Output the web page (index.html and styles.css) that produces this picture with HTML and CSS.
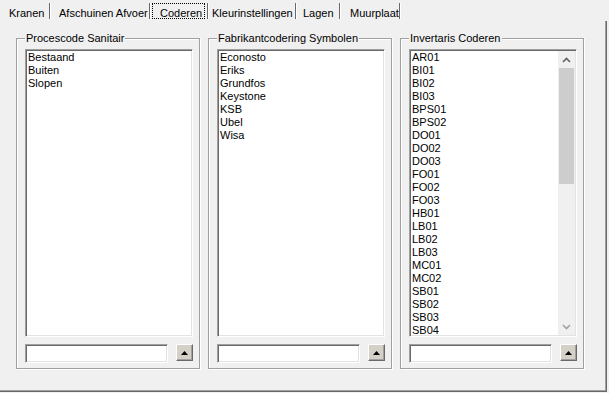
FILE: index.html
```html
<!DOCTYPE html>
<html lang="nl">
<head>
    <meta charset="UTF-8" />
    <title>Coderen</title>
    <link rel="stylesheet" href="styles.css">
</head>
<body>
    <div class="tabs">
        <div class="tab">Kranen</div>
        <div class="tab">Afschuinen Afvoer</div>
        <div class="tab active"><span class="focus">Coderen</span></div>
        <div class="tab">Kleurinstellingen</div>
        <div class="tab">Lagen</div>
        <div class="tab">Muurplaat</div>
    </div>
    <div class="page">
        <fieldset class="group">
            <legend>Procescode Sanitair</legend>
            <div class="list">
                <div class="items">
                    <div>Bestaand</div>
                    <div>Buiten</div>
                    <div>Slopen</div>
                </div>
            </div>
            <div class="entry">
                <div class="edit"></div>
                <button class="spin"><svg width="7" height="4" viewBox="0 0 7 4"><polygon points="3.5,0 7,4 0,4" fill="#000"/></svg></button>
            </div>
        </fieldset>
        <fieldset class="group">
            <legend>Fabrikantcodering Symbolen</legend>
            <div class="list">
                <div class="items">
                    <div>Econosto</div>
                    <div>Eriks</div>
                    <div>Grundfos</div>
                    <div>Keystone</div>
                    <div>KSB</div>
                    <div>Ubel</div>
                    <div>Wisa</div>
                </div>
            </div>
            <div class="entry">
                <div class="edit"></div>
                <button class="spin"><svg width="7" height="4" viewBox="0 0 7 4"><polygon points="3.5,0 7,4 0,4" fill="#000"/></svg></button>
            </div>
        </fieldset>
        <fieldset class="group">
            <legend>Invertaris Coderen</legend>
            <div class="list">
                <div class="items">
                    <div>AR01</div>
                    <div>BI01</div>
                    <div>BI02</div>
                    <div>BI03</div>
                    <div>BPS01</div>
                    <div>BPS02</div>
                    <div>DO01</div>
                    <div>DO02</div>
                    <div>DO03</div>
                    <div>FO01</div>
                    <div>FO02</div>
                    <div>FO03</div>
                    <div>HB01</div>
                    <div>LB01</div>
                    <div>LB02</div>
                    <div>LB03</div>
                    <div>MC01</div>
                    <div>MC02</div>
                    <div>SB01</div>
                    <div>SB02</div>
                    <div>SB03</div>
                    <div>SB04</div>
                </div>
                <div class="scrollbar">
                    <div class="arrow"><svg width="9" height="6" viewBox="0 0 9 6"><polyline points="1,5 4.5,1.5 8,5" fill="none" stroke="#606060" stroke-width="1.6"/></svg></div>
                    <div class="track"><div class="thumb"></div></div>
                    <div class="arrow down"><svg width="9" height="6" viewBox="0 0 9 6"><polyline points="1,1 4.5,4.5 8,1" fill="none" stroke="#a3a3a3" stroke-width="1.6"/></svg></div>
                </div>
            </div>
            <div class="entry">
                <div class="edit"></div>
                <button class="spin"><svg width="7" height="4" viewBox="0 0 7 4"><polygon points="3.5,0 7,4 0,4" fill="#000"/></svg></button>
            </div>
        </fieldset>
    </div>
</body>
</html>
```

FILE: styles.css
```css
body {
    margin: 0;
    background: #f0f0f0;
    font-family: "Liberation Sans", Arial, sans-serif;
    font-size: 11px;
    color: #000;
}

.tabs {
    display: flex;
    height: 21px;
    padding-left: 2px;
}

.tab {
    box-sizing: border-box;
    height: 16px;
    margin-top: 3px;
    padding-top: 4px;
    line-height: 13px;
    white-space: nowrap;
    border-right: 1px solid #696969;
    box-shadow: 1px 0 0 #fff;
}

.tab:nth-child(1) { width: 48px; padding-left: 7px; }
.tab:nth-child(2) { width: 99px; padding-left: 8px; margin-left: 1px; }
.tab:nth-child(3) { width: 58px; padding-left: 2px; }
.tab:nth-child(4) { width: 88px; padding-left: 4px; }
.tab:nth-child(5) { width: 44px; padding-left: 7px; }
.tab:nth-child(6) { width: 60px; padding-left: 10px; }

.tab.active {
    padding-top: 0;
}

.focus {
    display: inline-block;
    box-sizing: border-box;
    width: 53px;
    height: 16px;
    padding: 3px 0 0 7px;
    border: 1px dotted #000;
}

.page {
    box-sizing: border-box;
    width: 607px;
    height: 371px;
    display: flex;
    gap: 8px;
    padding: 11px 0 0 16px;
    border-right: 1px solid #696969;
    border-bottom: 1px solid #696969;
    box-shadow: inset -1px -1px 0 #a0a0a0;
}

.group {
    box-sizing: border-box;
    width: 184px;
    height: 337px;
    min-width: 0;
    margin: 0;
    padding: 4px 6px 4px 8px;
    border: 1px solid #a0a0a0;
    box-shadow: inset 1px 1px 0 #fff, 1px 1px 0 #fff;
}

.group legend {
    padding: 0 1px;
    line-height: 13px;
    background: #f0f0f0;
}

.list {
    box-sizing: border-box;
    width: 168px;
    height: 288px;
    display: flex;
    overflow: hidden;
    background: #fff;
    border: 1px solid;
    border-color: #a0a0a0 #fff #fff #a0a0a0;
    box-shadow: inset 1px 1px 0 #696969, inset -1px -1px 0 #e3e3e3;
}

.items {
    flex: 1;
    padding: 1px 0 0 2px;
    line-height: 13px;
    white-space: nowrap;
}

.scrollbar {
    width: 17px;
    margin: 1px 1px 1px 0;
    display: flex;
    flex-direction: column;
    background: #f0f0f0;
}

.arrow {
    height: 17px;
    display: flex;
    align-items: center;
    justify-content: center;
}

.track {
    flex: 1;
    padding: 0 1px;
}

.thumb {
    height: 116px;
    background: #cdcdcd;
}

.entry {
    display: flex;
    gap: 8px;
    margin-top: 7px;
}

.edit {
    box-sizing: border-box;
    width: 143px;
    height: 19px;
    background: #fff;
    border: 1px solid;
    border-color: #a0a0a0 #fff #fff #a0a0a0;
    box-shadow: inset 1px 1px 0 #696969, inset -1px -1px 0 #e3e3e3;
}

.spin {
    box-sizing: border-box;
    width: 17px;
    height: 17px;
    padding: 0;
    display: flex;
    align-items: center;
    justify-content: center;
    background: #d4d0c8;
    border: 1px solid;
    border-color: #fff #696969 #696969 #fff;
    box-shadow: inset -1px -1px 0 #a0a0a0;
}
```
